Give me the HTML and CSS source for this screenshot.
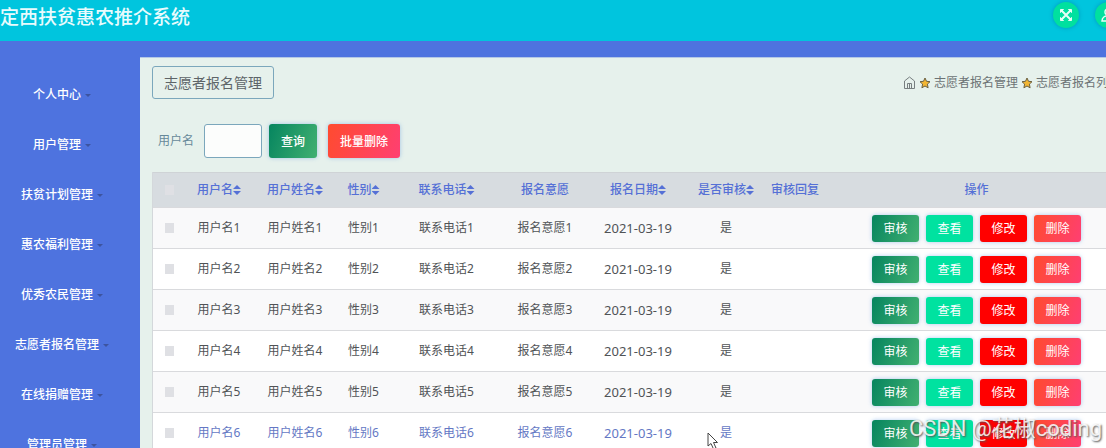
FILE: index.html
```html
<!DOCTYPE html>
<html lang="zh-CN">
<head>
    <meta charset="UTF-8">
    <meta name="viewport" content="width=device-width, initial-scale=1.0">
    <title>定西扶贫惠农推介系统</title>
    <link rel="stylesheet" href="styles.css">
</head>
<body>
    <div class="page">
        <header class="topbar">
            <h1>定西扶贫惠农推介系统</h1>
            <div class="tools">
                <button class="round" aria-label="全屏">
                    <svg width="14" height="14" viewBox="0 0 14 14" fill="#e6fff8" stroke="#e6fff8">
                        <path d="M3 3L11 11M11 3L3 11" stroke-width="2"/>
                        <path d="M1.5 1.5H4.5L1.5 4.5ZM12.5 1.5V4.5L9.5 1.5ZM1.5 12.5V9.5L4.5 12.5ZM12.5 12.5H9.5L12.5 9.5Z" stroke-width="1"/>
                    </svg>
                </button>
                <button class="round" aria-label="用户">
                    <svg width="14" height="14" viewBox="0 0 14 14" fill="none" stroke="#e6fff8" stroke-width="1.5">
                        <circle cx="7" cy="4" r="3"/>
                        <path d="M1 13C1 6 13 6 13 13Z"/>
                    </svg>
                </button>
            </div>
        </header>
        <div class="body">
            <nav class="sidebar">
                <a href="#">个人中心</a>
                <a href="#">用户管理</a>
                <a href="#">扶贫计划管理</a>
                <a href="#">惠农福利管理</a>
                <a href="#">优秀农民管理</a>
                <a href="#">志愿者报名管理</a>
                <a href="#">在线捐赠管理</a>
                <a href="#">管理员管理</a>
            </nav>
            <main class="content">
                <div class="title-row">
                    <h2>志愿者报名管理</h2>
                    <div class="crumbs">
                        <svg width="13" height="13" viewBox="0 0 13 13" fill="none" stroke="#777e80">
                            <path d="M1.5 5L6.5 1L11.5 5V12.5H1.5ZM4.5 12V7.5H8.5V12M6.5 7.5V12"/>
                        </svg>
                        <svg class="star" width="12" height="12" viewBox="0 0 12 12"><path d="M6 1L7.5 4.3L11 4.7L8.4 7.1L9.1 10.8L6 9L2.9 10.8L3.6 7.1L1 4.7L4.5 4.3Z"/></svg>
                        <span>志愿者报名管理</span>
                        <svg class="star" width="12" height="12" viewBox="0 0 12 12"><path d="M6 1L7.5 4.3L11 4.7L8.4 7.1L9.1 10.8L6 9L2.9 10.8L3.6 7.1L1 4.7L4.5 4.3Z"/></svg>
                        <span>志愿者报名列表</span>
                    </div>
                </div>
                <form class="search" onsubmit="return false">
                    <label for="username">用户名</label>
                    <input type="text" id="username">
                    <button class="btn green">查询</button>
                    <button type="button" class="btn pink">批量删除</button>
                </form>
                <table>
                    <colgroup>
                        <col class="c-check">
                        <col class="c-user">
                        <col class="c-name">
                        <col class="c-sex">
                        <col class="c-phone">
                        <col class="c-wish">
                        <col class="c-date">
                        <col class="c-audit">
                        <col class="c-reply">
                        <col>
                    </colgroup>
                    <thead>
                        <tr>
                            <th><input type="checkbox" aria-label="全选"></th>
                            <th class="sort">用户名</th>
                            <th class="sort">用户姓名</th>
                            <th class="sort">性别</th>
                            <th class="sort">联系电话</th>
                            <th>报名意愿</th>
                            <th class="sort">报名日期</th>
                            <th class="sort">是否审核</th>
                            <th>审核回复</th>
                            <th>操作</th>
                        </tr>
                    </thead>
                    <tbody id="rows"></tbody>
                </table>
            </main>
        </div>
    </div>
    <div class="watermark">CSDN @花椒coding</div>
    <svg class="cursor" width="13" height="19" viewBox="0 0 13 19"><path d="M1 1V14L4 11.5L6.5 17L9 16L6.5 10.5H10.5Z" fill="#fff" stroke="#444"/></svg>
    <script src="script.js"></script>
</body>
</html>
```

FILE: styles.css
```css
* {
    box-sizing: border-box;
}
body {
    margin: 0;
    height: 100vh;
    overflow: hidden;
    background: #4e73df;
    font-family: "Noto Sans", "Noto Sans CJK SC", sans-serif;
    font-size: 12px;
    line-height: 20px;
}
button, input {
    font: inherit;
}
/* the table needs more room than a narrow window gives */
.page {
    min-width: 1138px;
}
.topbar {
    display: flex;
    justify-content: space-between;
    height: 41px;
    background: #00c5de;
}
.topbar h1 {
    margin: 0;
    font-size: 19px;
    font-weight: 500;
    line-height: 34px;
    color: #e9fbfd;
}
.tools {
    display: flex;
    gap: 16px;
    padding: 2px 17px;
}
.round {
    display: flex;
    align-items: center;
    justify-content: center;
    width: 26px;
    height: 26px;
    padding: 0;
    border: none;
    border-radius: 50%;
    background: #00e09f;
    box-shadow: 0 0 4px rgba(0, 90, 140, 0.4);
}
.body {
    display: flex;
    padding-top: 16px;
}
.sidebar {
    width: 140px;
    flex: none;
    padding: 13px 16px 0 0;
}
.sidebar a {
    display: flex;
    align-items: center;
    justify-content: center;
    gap: 4px;
    height: 50px;
    color: #fff;
    font-weight: 500;
    text-decoration: none;
}
.sidebar a::after {
    content: "";
    border: 3px solid transparent;
    border-top-color: #3d549f;
    border-bottom: none;
}
.content {
    flex: 1;
    padding: 8px 12px;
    border-top: 1px solid #b4c8e6;
    background: #e6f1ec;
}
.title-row {
    display: flex;
    justify-content: space-between;
}
.title-row h2 {
    margin: 0;
    padding: 0 11px;
    border: 1px solid #7ba7bc;
    border-radius: 3px;
    font-size: 14px;
    font-weight: 400;
    line-height: 31px;
    color: #5d6468;
}
.crumbs {
    display: flex;
    align-items: center;
    gap: 3px;
    padding-right: 6px;
    color: #6c7375;
}
.star path {
    fill: #f2b632;
    stroke: #6b6040;
}
.search {
    display: flex;
    align-items: center;
    padding: 25px 0 14px 6px;
}
.search label {
    margin-right: 10px;
    color: #66899a;
}
.search input {
    width: 58px;
    height: 34px;
    margin-right: 7px;
    border: 1px solid #7ba7bc;
    border-radius: 3px;
    background: #fcfdfc;
}
.btn {
    height: 27px;
    padding: 2px 11px 0;
    border: none;
    border-radius: 3px;
    color: #fff;
    box-shadow: 0 0 4px rgba(60, 130, 220, 0.4);
    cursor: pointer;
}
.search .btn {
    height: 34px;
    margin-right: 11px;
    padding: 2px 12px 0;
    font-weight: 500;
}
.green { background: linear-gradient(110deg, #06855f, #41b071); }
.teal { background: #00e2a0; }
.red { background: #ff0000; }
.pink { background: linear-gradient(110deg, #ff4b2f, #ff3f72); }
table {
    width: 100%;
    table-layout: fixed;
    border-collapse: separate;
    border-spacing: 0;
    border-left: 1px solid #d4d8db;
    background: #fff;
    text-align: center;
}
.c-check { width: 32px; }
.c-user { width: 68px; }
.c-name { width: 84px; }
.c-sex { width: 53px; }
.c-phone { width: 113px; }
.c-wish { width: 84px; }
.c-date { width: 102px; }
.c-audit { width: 74px; }
.c-reply { width: 64px; }
th, td {
    padding: 0;
    white-space: nowrap;
}
th {
    height: 35px;
    border-top: 1px solid #cfd3d6;
    background: #d7dce0;
    color: #5570d6;
    font-weight: 500;
}
td {
    height: 41px;
    border-top: 1px solid #d9dadd;
    color: #505356;
}
tbody tr:nth-child(odd) {
    background: #f9f9fa;
}
tbody tr.active td {
    color: #6478c4;
}
.date {
    font-size: 13px;
}
/* up and down arrows */
.sort::after {
    content: "";
    display: inline-block;
    width: 8px;
    height: 10px;
    vertical-align: -1px;
    background: #5570d6;
    clip-path: polygon(50% 0, 100% 40%, 0 40%, 0 60%, 100% 60%, 50% 100%, 0 60%, 0 40%);
}
input[type="checkbox"] {
    appearance: none;
    display: block;
    width: 9px;
    height: 10px;
    margin: 0 auto;
    background: #dfe0e4;
}
.actions {
    display: flex;
    justify-content: center;
    gap: 7px;
}
.actions .btn {
    width: 47px;
}
.watermark {
    position: absolute;
    right: 4px;
    bottom: 4px;
    font-family: Roboto, "Noto Sans CJK SC", sans-serif;
    font-size: 22px;
    line-height: 30px;
    color: rgba(255, 255, 255, 0.85);
    text-shadow: 1px 1px 2px #555;
    pointer-events: none;
}
.cursor {
    position: absolute;
    left: 707px;
    top: 432px;
    pointer-events: none;
}
```

FILE: script.js
```javascript
const rows = document.getElementById("rows");
for (let i = 1; i <= 6; i++) {
    rows.innerHTML += `
        <tr class="${i === 6 ? "active" : ""}">
            <td><input type="checkbox" aria-label="选择${i}"></td>
            <td>用户名${i}</td>
            <td>用户姓名${i}</td>
            <td>性别${i}</td>
            <td>联系电话${i}</td>
            <td>报名意愿${i}</td>
            <td class="date">2021-03-19</td>
            <td>是</td>
            <td></td>
            <td>
                <div class="actions">
                    <button class="btn green">审核</button>
                    <button class="btn teal">查看</button>
                    <button class="btn red">修改</button>
                    <button class="btn pink">删除</button>
                </div>
            </td>
        </tr>`;
}
```
